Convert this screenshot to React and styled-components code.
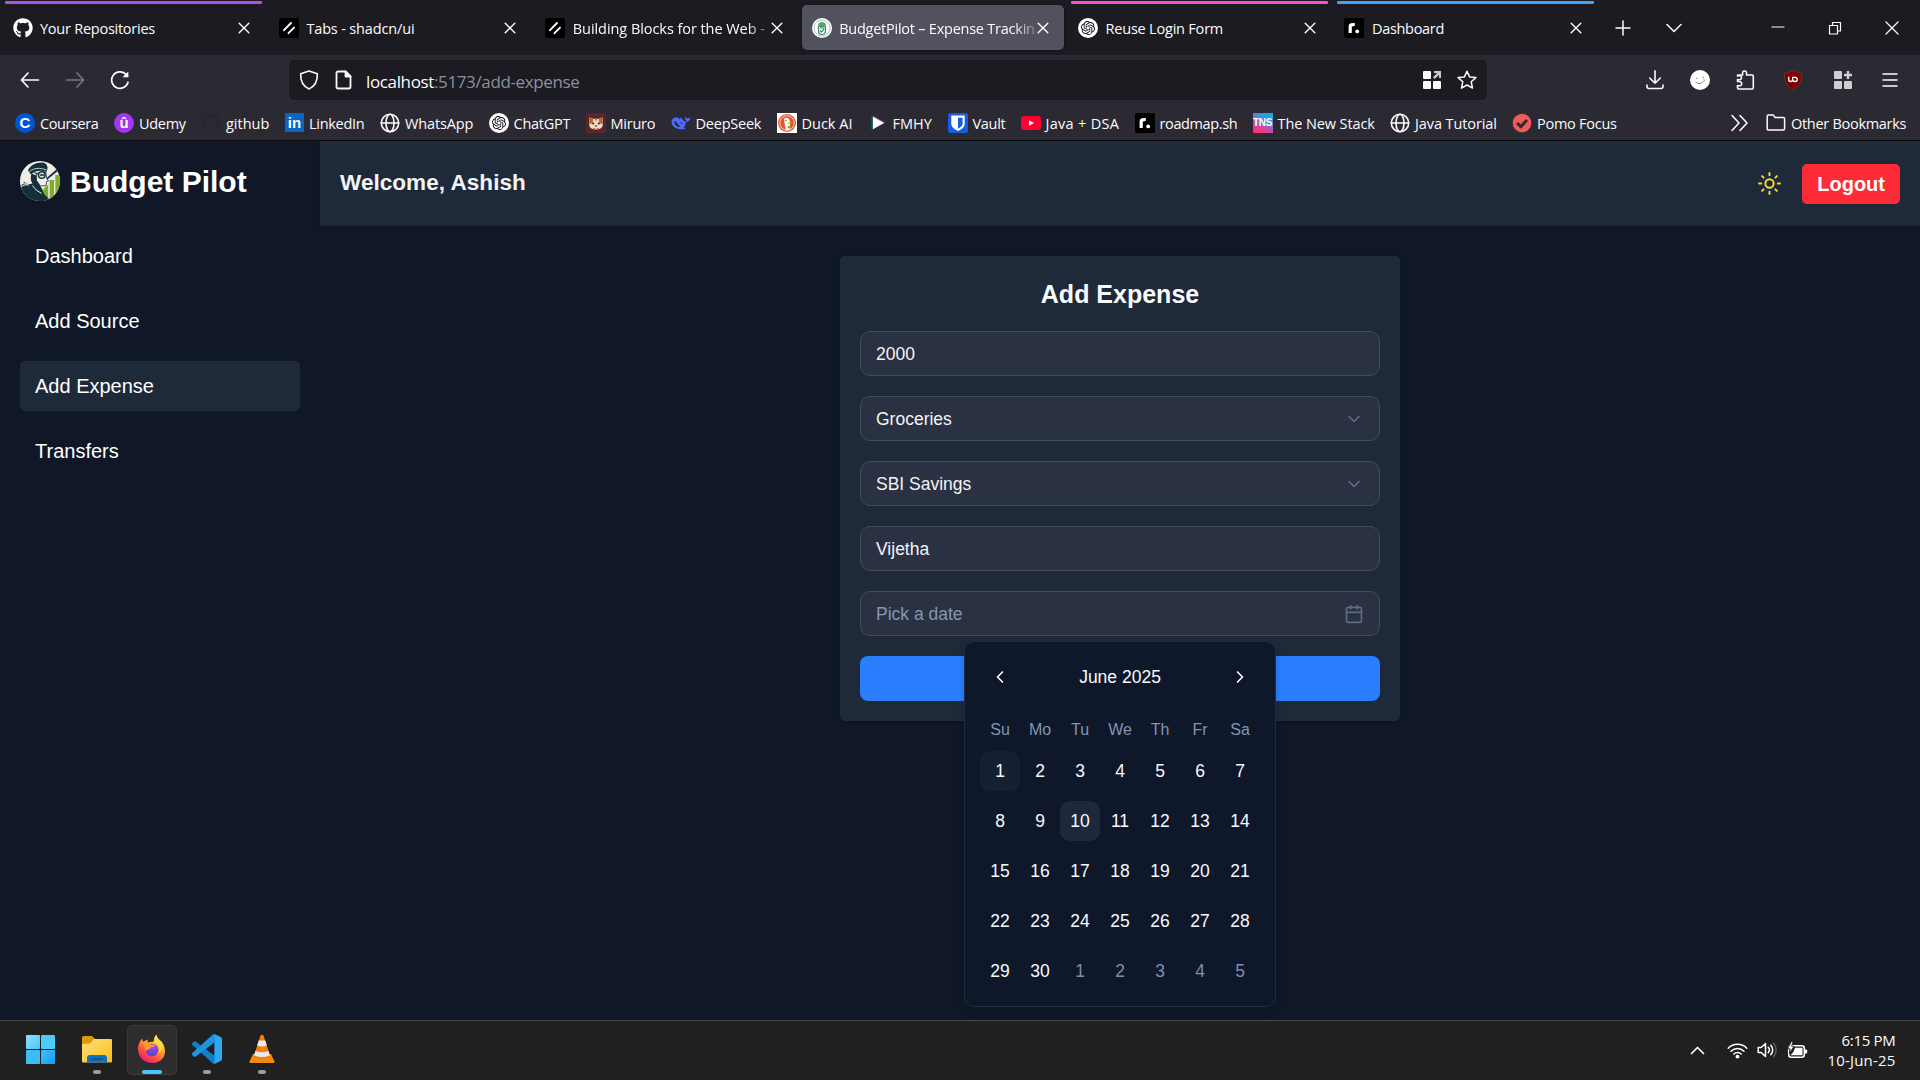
import React from "react";
import styled, { createGlobalStyle, css } from "styled-components";
import { Sun, ChevronDown, ChevronLeft, ChevronRight, Calendar } from "lucide-react";
import { FaGithub } from "react-icons/fa";
import { SiOpenai } from "react-icons/si";

const uiFont = `"Open Sans", "Noto Sans", sans-serif`;
const pageFont = `"Liberation Sans", Arial, sans-serif`;

const GlobalStyle = createGlobalStyle`
  *, *::before, *::after { box-sizing: border-box; }
  body { margin: 0; background: #101828; overflow: hidden; }
  svg { display: block; flex: none; }
`;

const Screen = styled.div`
  display: flex;
  flex-direction: column;
  width: 1920px;
  height: 1080px;
  color: #fbfbfe;
  font-family: ${uiFont};
  white-space: nowrap;
`;

/* ---------- browser chrome ---------- */

const TabBar = styled.div`
  display: flex;
  height: 55px;
  padding-left: 2.5px;
  background: #1c1b22;
`;
const TabList = styled.div`
  display: flex;
  gap: 4.4px;
`;
const TabBox = styled.div`
  display: flex;
  flex-direction: column;
  width: 262px;
  padding-top: 1px;
`;
const GroupLine = styled.div`
  height: 3px;
  margin: 0 2.5px 1px;
  border-radius: 1px;
  background: ${(p) => p.$color || "transparent"};
`;
const TabFace = styled.div`
  display: flex;
  align-items: center;
  height: 45px;
  padding: 0 10px;
  border-radius: 5px;
  background: ${(p) => (p.$active ? "#52525e" : "transparent")};
  box-shadow: ${(p) => (p.$active ? "0 0 3px rgba(0, 0, 0, 0.5)" : "none")};
`;
const TabTitle = styled.div`
  width: 197px;
  margin: 2px 0 0 7.5px;
  font-size: 14.5px;
  line-height: 24px;
  letter-spacing: ${(p) => p.$ls || 0}px;
  ${(p) =>
    p.$fade &&
    css`
      mask-image: linear-gradient(to right, #000 174px, transparent 204px);
    `}
`;
const ChromeSlot = styled.div`
  display: flex;
  align-items: center;
  justify-content: center;
  width: ${(p) => p.$w}px;
  height: ${(p) => p.$h || 45}px;
`;
const WindowControls = styled.div`
  display: flex;
  margin-left: auto;
`;
const NavBar = styled.div`
  display: flex;
  align-items: flex-end;
  height: 45px;
  padding: 0 8px 0 7.5px;
  background: #2b2a33;
`;
const NavButtons = styled.div`
  display: flex;
  width: 281.5px;
  height: 40px;
`;
const UrlBar = styled.div`
  display: flex;
  align-items: center;
  width: 1198px;
  height: 40px;
  padding: 0 10px;
  border-radius: 5px;
  background: #1c1b22;
`;
const UrlText = styled.div`
  margin: 3px auto 0 12px;
  color: #8f8f99;
  font-size: 17px;
  line-height: 26px;
  letter-spacing: -0.365px;
`;
const UrlHost = styled.span`
  color: #fbfbfe;
`;
const UrlIcons = styled.div`
  display: flex;
  align-items: center;
  gap: ${(p) => p.$gap}px;
`;
const Actions = styled.div`
  display: flex;
  margin-left: auto;
`;
const BookmarkBar = styled.div`
  display: flex;
  align-items: center;
  gap: 15px;
  height: 41px;
  padding: 5px 14px 0 15px;
  border-bottom: 1px solid #0c0c0d;
  background: #2b2a33;
`;
const Bookmark = styled.div`
  display: flex;
  align-items: center;
  gap: 5px;
  height: 24px;
`;
const BookmarkLabel = styled.div`
  width: ${(p) => p.$w}px;
  padding-top: 2px;
  font-size: 14.5px;
  line-height: 22px;
  letter-spacing: ${(p) => p.$ls || 0}px;
`;
const OtherBookmarks = styled.div`
  display: flex;
  align-items: center;
  gap: 17px;
  margin-left: auto;
`;
const Tile = styled.div`
  display: flex;
  flex: none;
  align-items: center;
  justify-content: center;
  width: ${(p) => p.$w || 20}px;
  height: ${(p) => p.$w || 20}px;
  border-radius: ${(p) => p.$radius || 0};
  background: ${(p) => p.$bg};
  color: #fff;
  font: bold ${(p) => p.$size || 14}px / 20px ${(p) => p.$font || pageFont};
  letter-spacing: ${(p) => p.$ls || 0}px;
`;

/* ---------- application ---------- */

const AppFrame = styled.div`
  display: flex;
  height: 879px;
  background: #101828;
  color: #fff;
  font-family: ${pageFont};
`;
const Sidebar = styled.aside`
  width: 320px;
  padding: 20px;
`;
const Brand = styled.div`
  display: flex;
  align-items: center;
  gap: 10px;
  height: 40px;
`;
const BrandName = styled.div`
  padding-top: 1px;
  font-size: 30px;
  font-weight: bold;
  line-height: 40px;
`;
const Menu = styled.nav`
  display: flex;
  flex-direction: column;
  gap: 15px;
  margin-top: 30px;
`;
const MenuItem = styled.div`
  height: 50px;
  padding: 0 15px;
  border-radius: 5px;
  background: ${(p) => (p.$active ? "#1e2939" : "transparent")};
  font-size: 20px;
  line-height: 50px;
`;
const Content = styled.div`
  display: flex;
  flex: 1;
  flex-direction: column;
  align-items: center;
`;
const Header = styled.header`
  display: flex;
  align-items: center;
  width: 100%;
  height: 85px;
  padding: 0 20px;
  background: #1e2939;
  box-shadow: 0 1px 3px rgba(0, 0, 0, 0.2);
`;
const Welcome = styled.div`
  margin: 0 auto 1px 0;
  color: #f3f4f6;
  font-size: 22.5px;
  font-weight: bold;
  letter-spacing: 0.05px;
`;
const Logout = styled.div`
  height: 40px;
  margin-left: 20px;
  padding: 0 15px;
  border-radius: 5px;
  background: #fb2c36;
  font-size: 20px;
  font-weight: bold;
  line-height: 40px;
`;
const Card = styled.section`
  display: flex;
  flex-direction: column;
  gap: 20px;
  width: 560px;
  margin-top: 30px;
  padding: 20px;
  border-radius: 5px;
  background: #1e2939;
  box-shadow: 0 1px 3px rgba(0, 0, 0, 0.2);
`;
const CardTitle = styled.h2`
  height: 35px;
  margin: 0;
  color: #f9fafb;
  font-size: 25px;
  line-height: 37px;
  text-align: center;
`;
const Field = styled.div`
  position: relative;
  display: flex;
  align-items: center;
  justify-content: space-between;
  height: 45px;
  padding: 0 15px;
  border: 1px solid #434b59;
  border-radius: 10px;
  background: #293142;
  color: ${(p) => (p.$placeholder ? "#8498b5" : "#f3f4f6")};
  font-size: 17.5px;

  & > svg {
    color: #5f6d82;
  }
`;
const FieldText = styled.span`
  padding-top: 2px;
`;
const Submit = styled.div`
  height: 45px;
  border-radius: 8px;
  background: #2b7fff;
`;
const Popover = styled.div`
  position: absolute;
  z-index: 2;
  top: 49px;
  left: 103px;
  display: flex;
  flex-direction: column;
  width: 312px;
  height: 366px;
  padding: 15px;
  border: 1px solid #232c3c;
  border-radius: 10px;
  background: #0f172a;
  color: #f8fafc;
  box-shadow: 0 4px 8px rgba(0, 0, 0, 0.15);
`;
const MonthRow = styled.div`
  display: flex;
  align-items: center;
  justify-content: space-between;
  height: 40px;
  padding: 0 10px;
  line-height: 40px;
`;
const WeekRow = styled.div`
  display: grid;
  grid-template-columns: repeat(7, 40px);
  margin-top: 21px;
  color: #8295b0;
  font-size: 16px;
  line-height: 24px;
  text-align: center;
`;
const DayGrid = styled.div`
  display: grid;
  grid-template-columns: repeat(7, 40px);
  grid-auto-rows: 40px;
  row-gap: 10px;
  margin-top: 9px;
`;
const Day = styled.div`
  border-radius: 10px;
  background: ${(p) => p.$bg || "transparent"};
  color: ${(p) => (p.$outside ? "#7c90ad" : "#f8fafc")};
  line-height: 40px;
  text-align: center;
`;

/* ---------- taskbar ---------- */

const Taskbar = styled.div`
  display: flex;
  align-items: flex-start;
  height: 60px;
  padding: 4px 24.5px 0 17px;
  border-top: 1px solid #474747;
  background: #202020;
`;
const TaskApps = styled.div`
  display: flex;
  gap: 5px;
`;
const TaskApp = styled.div`
  display: flex;
  flex-direction: column;
  align-items: center;
  width: 50px;
  height: 50px;
  padding-top: 8px;
  border: 1px solid ${(p) => (p.$active ? "#3a3a3a" : "transparent")};
  border-radius: 5px;
  background: ${(p) => (p.$active ? "#2d2d2d" : "transparent")};
`;
const StartButton = styled(TaskApp)`
  align-items: flex-start;
  padding-left: 7px;
`;
const Indicator = styled.div`
  width: ${(p) => (p.$active ? 20 : 8)}px;
  height: 4px;
  margin-top: 6px;
  border-radius: 2px;
  background: ${(p) => (p.$active ? "#4cc2ff" : "#9a9a9a")};
`;
const Tray = styled.div`
  display: flex;
  align-items: center;
  height: 50px;
  margin-left: auto;
`;
const TrayIcons = styled.div`
  display: flex;
  align-items: center;
  gap: 9px;
  margin: 0 19px 0 22px;
`;
const Clock = styled.div`
  display: flex;
  flex-direction: column;
  align-items: flex-end;
  width: 69px;
  font-size: 15px;
  line-height: 20px;
`;
const ClockLine = styled.div`
  letter-spacing: ${(p) => p.$ls}px;
`;

/* ---------- icons ---------- */

const Stroke = ({ s = 20, w = 1.5, c = "#fbfbfe", children, box = 20 }) => (
  <svg width={s} height={s} viewBox={`0 0 ${box} ${box}`} fill="none" stroke={c} strokeWidth={w} strokeLinecap="round" strokeLinejoin="round">
    {children}
  </svg>
);

const CloseIcon = () => (
  <Stroke s={14} box={14} w={1.4}>
    <path d="M2.2 2.2l9.6 9.6M11.8 2.2l-9.6 9.6" />
  </Stroke>
);
const GlobeIcon = () => (
  <Stroke w={1.6}>
    <circle cx="10" cy="10" r="8.7" />
    <ellipse cx="10" cy="10" rx="4" ry="8.7" />
    <path d="M1.3 10h17.4" />
  </Stroke>
);
const ShadcnIcon = () => (
  <svg width="20" height="20" viewBox="0 0 20 20">
    <rect width="20" height="20" rx="2" fill="#000" />
    <path d="M5 12.2L12 5M9.5 15.2l5.5-5.6" stroke="#fff" strokeWidth="1.9" strokeLinecap="round" />
  </svg>
);
const RoadmapIcon = () => (
  <svg width="20" height="20" viewBox="0 0 20 20">
    <rect width="20" height="20" rx="1.5" fill="#000" />
    <path d="M6.200 15V8.200q0-1.800 4.600-1.700" fill="none" stroke="#fff" strokeWidth="3.200" />
    <circle cx="13.2" cy="13.4" r="1.9" fill="#fff" />
  </svg>
);
const BudgetFavicon = () => (
  <svg width="20" height="20" viewBox="0 0 20 20">
    <circle cx="10" cy="10" r="10" fill="#fff" />
    <circle cx="10" cy="10" r="8" fill="none" stroke="#8db8a0" strokeWidth="0.8" />
    <path d="M6.2 6.2c1-3 6.200-3 7.600 0l-.6 2.200H6.800z" fill="#5fa07c" />
    <path d="M6.500 8.500h7v4c0 2.500-1.700 4-3.500 4s-3.500-1.500-3.500-4z" fill="none" stroke="#3d8a61" strokeWidth="1.200" />
    <path d="M8 12.500l1.500 1.500 3-3.500M8 10h4" fill="none" stroke="#2b7a50" strokeWidth="1.100" />
  </svg>
);
const GithubIcon = ({ color }) => <FaGithub size={20} color={color} />;
const ChatGptIcon = () => (
  <Tile $bg="#fff" $radius="50%">
    <SiOpenai size={14} color="#111" />
  </Tile>
);
const MiruroIcon = () => (
  <svg width="20" height="20" viewBox="0 0 20 20">
    <rect width="20" height="20" rx="1" fill="#5b262b" />
    <path d="M3 3.500l4 1.700h6l4-1.700.2 8c0 3.500-3 5.500-7.200 5.500S2.800 15 2.800 11.500z" fill="#f3ddc4" stroke="#2a1213" strokeWidth=".8" />
    <path d="M3.600 4.500l3.800 1.600-.8 4-3.200 1.200zM16.400 4.500l-3.800 1.600.8 4 3.200 1.200zM8.800 5.400h2.400L10 9z" fill="#b8643a" />
    <circle cx="7.200" cy="10.600" r="1" fill="#231011" />
    <circle cx="12.800" cy="10.600" r="1" fill="#231011" />
    <path d="M8.600 12.500h2.800L10 14z" fill="#231011" />
    <path d="M7 15.500q3 1.500 6 0" stroke="#c4574b" strokeWidth="1" fill="none" />
  </svg>
);
const DeepSeekIcon = () => (
  <svg width="20" height="20" viewBox="0 0 20 20" fill="#4d6bfe">
    <path d="M19.500 4.600c-1.300.1-1.700.9-2.700 1-1.300-.2-1.700-1.300-2.900-2.200-.3 1.900.5 3 1.400 4-.4 3.300-1.300 5.400-2.600 7 .6.400 1.300.600 2.100.8-2.300 1.200-4.500 1.500-6.700.9C3.500 15.300.6 12.200.6 8.900c0-3 2.400-4.900 5.300-4.300 1.100.2 2.100.800 3.100 1.600-.1-.900.200-1.400 1-1.800.7 1.300 1.900 2.300 3.200 3.600.9.900 1.700 1.400 2.700 1 2.100-.5 3.300-2.200 3.600-4.400zM9.700 14c-2.500-1.900-3.700-5.700-6.400-6-.5 2.800 2.200 6.600 6.400 6zM9.500 9.200c.3 1 1 1.800 1.900 1.900.4-1-.6-2.100-1.900-1.900z" fillRule="evenodd" />
  </svg>
);
const DuckIcon = () => (
  <svg width="20" height="20" viewBox="0 0 20 20">
    <rect width="20" height="20" fill="#fff" />
    <circle cx="10" cy="10" r="9" fill="#de5833" />
    <circle cx="10" cy="10" r="7.300" fill="none" stroke="#fff" strokeWidth=".7" />
    <path d="M7 6.500C7.500 3.800 12 4 12.600 7.400l.6 9.200c-1.200.6-3.200.7-4.400.3z" fill="#fff" />
    <path d="M10.300 9.500c1-.8 3-.7 4 .2-.8.900-2.800 1.300-4 .8z" fill="#fdd20a" />
    <path d="M10.500 13.500l3-1v3.200l-3-.8z" fill="#65bc46" />
    <circle cx="8.900" cy="7.400" r=".7" fill="#2d4f8e" />
  </svg>
);
const PlayIcon = () => (
  <svg width="20" height="20" viewBox="0 0 20 20">
    <path d="M4.300 3.500v13" stroke="#1f6f79" strokeWidth="1.500" />
    <path d="M5 3.500l11.500 6.200" stroke="#7a3f90" strokeWidth="1.500" />
    <path d="M5 3.800l11.200 6.200L5 16.200z" fill="#fff" />
  </svg>
);
const VaultIcon = () => (
  <svg width="20" height="20" viewBox="0 0 20 20">
    <rect width="20" height="20" rx="2.500" fill="#175ddc" />
    <path d="M3.300 2.500h13.400v8c0 3.500-2.700 5.600-6.700 7.600-4-2-6.700-4.100-6.700-7.600z" fill="#fff" />
    <path d="M10 4.700h4.600v5.800c0 2.200-1.700 3.700-4.600 5.300z" fill="#175ddc" />
  </svg>
);
const YoutubeIcon = () => (
  <svg width="20" height="20" viewBox="0 0 20 20">
    <rect y="3" width="20" height="14" rx="3" fill="#ff0033" />
    <path d="M8 7.200l5 2.800-5 2.800z" fill="#fff" />
  </svg>
);
const PomoIcon = () => (
  <svg width="20" height="20" viewBox="0 0 20 20">
    <circle cx="10" cy="10" r="9.300" fill="#f05b56" />
    <path d="M5.200 10l3.600 3.500 6.200-6.500" fill="none" stroke="#2b2a33" strokeWidth="3" />
  </svg>
);
const FolderOutline = () => (
  <Stroke w={1.5}>
    <path d="M1.200 15.500V3.200q0-1.200 1.200-1.200h4.800l2 2.400h8q1.400 0 1.400 1.400v9.700q0 1.500-1.400 1.500H2.600q-1.400 0-1.400-1.500z" />
  </Stroke>
);
const SquaresIcon = ({ plus }) => (
  <svg width="18" height="18" viewBox="0 0 18 18" fill={plus ? "#cfcfd2" : "#fbfbfe"}>
    <rect width="8" height="8" rx="1" />
    <rect y="10" width="8" height="8" rx="1" />
    <rect x="10" y="10" width="8" height="8" rx="1" />
    {plus ? (
      <path d="M12.800 0h2.400v2.800H18v2.400h-2.800V8h-2.400V5.200H10V2.800h2.800z" />
    ) : (
      <path d="M11 0h7v7h-2V3.700L11.800 8 10 6.200 14.200 2H11z" fill="#c9c9cd" />
    )}
  </svg>
);
const PilotLogo = () => (
  <svg width="40" height="40" viewBox="0 0 40 40">
    <clipPath id="pilot-clip">
      <circle cx="20" cy="20" r="20" />
    </clipPath>
    <g clipPath="url(#pilot-clip)">
      <rect width="40" height="40" fill="#efede6" />
      <path d="M23.500 27.500l5-4V40h-5zM29.500 19h4.700v21h-4.700zM35.200 14H40v26h-4.800z" fill="#7fae2c" />
      <path d="M26 17.500L37.500 7.500l1.300 1.700-13 10.600z" fill="#16303a" />
      <path d="M8 9.500C10 4 17 1 22.500 1.500c3.500.4 5.300 3 5 6l-1 3.500-4-1c-4-.6-8 .3-11.500 3.500z" fill="#16303a" />
      <path d="M9.500 10.500c4.500-3.500 10-4.200 17-1.500" stroke="#efede6" strokeWidth=".8" fill="none" />
      <path d="M11.500 12.500c-1.500 5-.5 9 2.500 12l4.500 4.500 4.500.5-5.500-9-1-6z" fill="#16303a" />
      <path d="M16.500 12.500l9.500-1 .5 5.500 2 3-1.800.5-.6 4-5.600.5-4-5.500z" fill="#efede6" stroke="#16303a" strokeWidth=".8" />
      <circle cx="21.800" cy="14" r="3.300" fill="#dfe3e1" stroke="#16303a" strokeWidth="1.500" />
      <path d="M20 14h4M14.500 11.500l3.500 1.500" stroke="#16303a" strokeWidth="1.300" />
      <path d="M0 26.500l4-5.500 5 2.200 3.500-.8 10.500 7 1 3.200v8H4C1 37-1 31 0 26.500z" fill="#16303a" />
      <path d="M0 22.500l8 .4M1 26c3-2.500 5.500-2.400 8-2M12.500 24.500c2.500 4 6 6.500 10.500 8.500" stroke="#efede6" strokeWidth="1" fill="none" />
      <path d="M28.900 22v18M34.700 15v25" stroke="#efede6" strokeWidth=".9" />
      <path d="M22 31l9 9H20z" fill="#16303a" />
    </g>
  </svg>
);
const StartIcon = () => (
  <svg width="30" height="30" viewBox="0 0 30 30">
    <defs>
      <linearGradient id="win" x1="0" y1="0" x2="1" y2="1">
        <stop offset="0" stopColor="#8ce0ff" />
        <stop offset="1" stopColor="#4cc6f6" />
      </linearGradient>
      <linearGradient id="win2" x1="0" y1="0" x2="1" y2="1">
        <stop offset="0" stopColor="#42bff7" />
        <stop offset="1" stopColor="#149df5" />
      </linearGradient>
    </defs>
    <rect x="1" y="1" width="14" height="14" rx="1" fill="url(#win)" />
    <rect x="16" y="1" width="14" height="14" rx="1" fill="#4fcbf8" />
    <rect x="1" y="16" width="14" height="14" rx="1" fill="#3dbdf6" />
    <rect x="16" y="16" width="14" height="14" rx="1" fill="url(#win2)" />
  </svg>
);
const ExplorerIcon = () => (
  <svg width="30" height="30" viewBox="0 0 30 30">
    <defs>
      <linearGradient id="folder" x1="0" y1="0" x2="1" y2="1">
        <stop offset="0" stopColor="#ffdf7c" />
        <stop offset="1" stopColor="#f9bd17" />
      </linearGradient>
    </defs>
    <path d="M0 4q0-2 2-2h8l3 3v6H0z" fill="#dc9a08" />
    <path d="M0 10l8-.5L12 5h17q1 0 1 1v21.500q0 1-1 1H1q-1 0-1-1z" fill="url(#folder)" />
    <path d="M5 28.500V24q0-3 3-3h14q3 0 3 3v4.500z" fill="#0f6fc0" />
    <path d="M9 25h12" stroke="#0a4a86" strokeWidth="1.400" />
  </svg>
);
const FirefoxIcon = () => (
  <svg width="30" height="30" viewBox="0 0 30 30">
    <defs>
      <linearGradient id="fox" x1=".8" y1=".1" x2=".25" y2="1">
        <stop offset="0" stopColor="#fff44f" />
        <stop offset=".35" stopColor="#ffa72b" />
        <stop offset=".7" stopColor="#ff4a45" />
        <stop offset="1" stopColor="#e31587" />
      </linearGradient>
      <radialGradient id="globe" cx=".6" cy=".3" r=".8">
        <stop offset="0" stopColor="#a845f0" />
        <stop offset="1" stopColor="#4a43c4" />
      </radialGradient>
    </defs>
    <path d="M19.500.5c.4 3 1.800 4.200 4 6.200 1.200.5 1.700 1.300 2 2.400 4.600 7 3.500 19.400-10.300 20C7.500 29 1 23.500 1 15c0-3.500 1-5.800 2.600-8.500L5 4.500l1 3.300 4.700-2.300-.1 3c2.200-.7 4.200-1 6.200-.6-.2-3.500 1-6 2.700-7.400z" fill="url(#fox)" />
    <circle cx="15" cy="16" r="6.300" fill="url(#globe)" />
    <path d="M5.500 8.500c3.500-1 6.500.2 8.800 2.200h4.200c-.6 1.700-2.200 2-4.500 2.600-.5 2-3.500 1.600-4.500 3.700-1-1-2.500-5.500-4-8.500z" fill="#ff9a2e" />
    <path d="M16.500 8.500c5 .5 7.500 6.300 4.500 10.800 3-1.500 4-4.300 4.300-7-2.300-4-5-6-5.500-9.500-2 1.700-3 3.500-3.300 5.700z" fill="#ffd83a" />
  </svg>
);
const CodeIcon = () => (
  <svg width="30" height="30" viewBox="0 0 24 24">
    <path fill="#0f7fc9" d="M23.150 2.587L18.210.21a1.494 1.494 0 0 0-1.705.29l-9.460 8.630-4.120-3.128a.999.999 0 0 0-1.276.057L.327 7.261A1 1 0 0 0 .326 8.740L3.899 12 .326 15.260a1 1 0 0 0 .001 1.479L1.650 17.940a.999.999 0 0 0 1.276.057l4.120-3.128 9.460 8.630a1.492 1.492 0 0 0 1.704.290l4.942-2.377A1.500 1.500 0 0 0 24 20.060V3.939a1.500 1.500 0 0 0-.850-1.352zm-5.146 14.861L10.826 12l7.178-5.448v10.896z" />
    <path fill="#2ea7ee" d="M18 .2l5.150 2.387A1.500 1.500 0 0 1 24 3.939V20.060a1.500 1.500 0 0 1-.850 1.352L18 23.800z" />
    <path fill="#1d94dc" d="M.327 16.740a1 1 0 0 1 0-1.480L17 .3q1-.5 1 1v5.250L2.926 18a1 1 0 0 1-1.276-.06z" />
  </svg>
);
const VlcIcon = () => (
  <svg width="30" height="30" viewBox="0 0 30 30">
    <path d="M6 20h18l3.500 7.500q.4 1.500-1 1.500h-23q-1.400 0-1-1.500z" fill="#f08a10" />
    <path d="M13.500 1.500q1.500-1.500 3 0L23.500 23q-8.500 4-17 0z" fill="#f47f0a" />
    <path d="M11.800 6.500h6.400l1.700 5q-4.900 2-9.800 0zM8.400 17q6.600 2.400 13.200 0l1.300 4.500q-7.900 3-15.800 0z" fill="#e8eaee" />
  </svg>
);
const WifiIcon = () => (
  <svg width="21" height="17" viewBox="0 0 21 17" fill="none" stroke="#fff" strokeWidth="1.500" strokeLinecap="round">
    <path d="M1.200 6.200a13 13 0 0 1 18.600 0M4 9.300a9 9 0 0 1 13 0M6.800 12a5.300 5.300 0 0 1 7.400 0" />
    <circle cx="10.500" cy="14.600" r="1.200" fill="#fff" />
  </svg>
);
const VolumeIcon = () => (
  <svg width="21" height="18" viewBox="0 0 21 18" fill="none" stroke="#fff" strokeWidth="1.500" strokeLinecap="round" strokeLinejoin="round">
    <path d="M1.200 6.500h3L8.500 2.500v13l-4.300-4h-3z" />
    <path d="M11.200 6.300a4 4 0 0 1 0 5.400M13.800 4.200a7 7 0 0 1 0 9.600" />
    <path d="M16.500 2.200a10 10 0 0 1 0 13.600" stroke="#5c5c5c" />
  </svg>
);
const BatteryIcon = () => (
  <svg width="21" height="18" viewBox="0 0 21 18">
    <rect x="1.700" y="4.700" width="15.600" height="11.600" rx="2.500" fill="none" stroke="#fff" strokeWidth="1.500" />
    <path d="M18 8.500h1.200q1 0 1 1v2q0 1-1 1H18z" fill="#fff" />
    <path d="M8 6.700h7.500v7.600h-12l3-3.500z" fill="#fff" />
    <path d="M4.300.5L.8 7.800h2.400L2.200 12.500 7 5.300H4.600L6 .5z" fill="#fff" stroke="#202020" strokeWidth=".8" />
  </svg>
);

/* ---------- data ---------- */

const TABS = [
  { title: "Your Repositories", ls: -0.247, line: "#ac51f0", icon: <GithubIcon color="#fff" /> },
  { title: "Tabs - shadcn/ui", ls: -0.154, icon: <ShadcnIcon /> },
  { title: "Building Blocks for the Web -", ls: -0.06, fade: true, icon: <ShadcnIcon /> },
  { title: "BudgetPilot – Expense Trackin", ls: -0.24, fade: true, active: true, icon: <BudgetFavicon /> },
  { title: "Reuse Login Form", ls: -0.209, line: "#ff4bda", icon: <ChatGptIcon /> },
  { title: "Dashboard", ls: -0.316, line: "#37a4ff", icon: <RoadmapIcon /> },
];

const BOOKMARKS = [
  { label: "Coursera", w: 59, ls: -0.4, icon: <Tile $bg="#0056d2" $radius="50%" $size={15}>C</Tile> },
  { label: "Udemy", w: 47, ls: -0.3, icon: <Tile $bg="#a435f0" $radius="50%" $size={15}>û</Tile> },
  { label: "github", w: 44, ls: 0, icon: <GithubIcon color="#24292e" /> },
  { label: "LinkedIn", w: 56, ls: -0.3, icon: <Tile $bg="#0a66c2" $w={19} $size={15}>in</Tile> },
  { label: "WhatsApp", w: 68.5, ls: -0.13, icon: <GlobeIcon /> },
  { label: "ChatGPT", w: 57, ls: -0.24, icon: <ChatGptIcon /> },
  { label: "Miruro", w: 45, ls: -0.24, icon: <MiruroIcon /> },
  { label: "DeepSeek", w: 66, ls: -0.22, icon: <DeepSeekIcon /> },
  { label: "Duck AI", w: 51, ls: 0, icon: <DuckIcon /> },
  { label: "FMHY", w: 40, ls: 0, icon: <PlayIcon /> },
  { label: "Vault", w: 33, ls: -0.3, icon: <VaultIcon /> },
  { label: "Java + DSA", w: 74, ls: 0.3, icon: <YoutubeIcon /> },
  { label: "roadmap.sh", w: 78, ls: -0.38, icon: <RoadmapIcon /> },
  {
    label: "The New Stack",
    w: 97.5,
    ls: -0.1,
    icon: <Tile $bg="linear-gradient(25deg, #ff2f7e 15%, #8a6cc0 50%, #12a9ee 85%)" $size={10} $ls={-0.3}>TNS</Tile>,
  },
  { label: "Java Tutorial", w: 82, ls: -0.1, icon: <GlobeIcon /> },
  { label: "Pomo Focus", w: 80, ls: -0.26, icon: <PomoIcon /> },
];

const MENU = ["Dashboard", "Add Source", "Add Expense", "Transfers"];
const WEEKDAYS = ["Su", "Mo", "Tu", "We", "Th", "Fr", "Sa"];
const DAYS = Array.from({ length: 35 }, (_, i) => ({ n: (i % 30) + 1, outside: i >= 30 }));
const dayFill = (i) => (i === 0 ? "#152033" : i === 9 ? "#1d293b" : undefined);

export default function App() {
  return (
    <Screen>
      <GlobalStyle />
      <TabBar>
        <TabList>
          {TABS.map((t) => (
            <TabBox key={t.title}>
              <GroupLine $color={t.line} />
              <TabFace $active={t.active}>
                {t.icon}
                <TabTitle $fade={t.fade} $ls={t.ls}>{t.title}</TabTitle>
                <CloseIcon />
              </TabFace>
            </TabBox>
          ))}
        </TabList>
        <ChromeSlot $w={54} $h={56}>
          <Stroke s={16} box={16}><path d="M8 1v14M1 8h14" /></Stroke>
        </ChromeSlot>
        <ChromeSlot $w={48} $h={55}>
          <Stroke s={16} box={16}><path d="M1 4.500l7 7 7-7" /></Stroke>
        </ChromeSlot>
        <WindowControls>
          <ChromeSlot $w={57} $h={53}>
            <Stroke s={14} box={14} w={1.2}><path d="M1 7h12" /></Stroke>
          </ChromeSlot>
          <ChromeSlot $w={57} $h={55}>
            <Stroke s={14} box={14} w={1.2}><path d="M1.500 4.500h8v8.500h-8zM4.500 4.500v-3h8V10h-3" /></Stroke>
          </ChromeSlot>
          <ChromeSlot $w={57} $h={55}>
            <Stroke s={14} box={14} w={1.2}><path d="M1 1l12 12M13 1L1 13" /></Stroke>
          </ChromeSlot>
        </WindowControls>
      </TabBar>

      <NavBar>
        <NavButtons>
          <ChromeSlot $w={45} $h={40}>
            <Stroke w={1.7}><path d="M18.500 10H1.500M8 3L1.500 10 8 17" /></Stroke>
          </ChromeSlot>
          <ChromeSlot $w={45} $h={40}>
            <Stroke w={1.7} c="#77767e"><path d="M1.500 10h17M12 3l6.500 7L12 17" /></Stroke>
          </ChromeSlot>
          <ChromeSlot $w={45} $h={40}>
            <Stroke w={1.7}>
              <path d="M18 12.200a8.300 8.300 0 1 1-2.500-8.300l2 2" />
              <path d="M18.300 1.500v5.800h-5.800z" fill="#fbfbfe" stroke="none" />
            </Stroke>
          </ChromeSlot>
        </NavButtons>
        <UrlBar>
          <UrlIcons $gap={15}>
            <Stroke w={1.6}><path d="M10 1L18.300 3.800c.3 6.500-1.800 12.200-8.300 15.200C3.500 16 1.400 10.300 1.700 3.800z" /></Stroke>
            <Stroke w={1.8}>
              <path d="M11.500 1.500H4.200q-1.700 0-1.700 1.700v13.600q0 1.700 1.700 1.700h10.600q1.700 0 1.700-1.700V6.500z" />
              <path d="M11.500 1.500v5h5z" fill="#fbfbfe" />
            </Stroke>
          </UrlIcons>
          <UrlText>
            <UrlHost>localhost</UrlHost>:5173/add-expense
          </UrlText>
          <UrlIcons $gap={16}>
            <SquaresIcon />
            <Stroke w={1.5}>
              <path d="M10 1.200l2.600 5.700 6.300.7-4.700 4.200 1.300 6.300L10 15l-5.500 3.100 1.300-6.300L1.100 7.600l6.300-.7z" />
            </Stroke>
          </UrlIcons>
        </UrlBar>
        <Actions>
          <ChromeSlot $w={45} $h={40}>
            <Stroke w={1.6}><path d="M10 .8v12.400M4.700 8L10 13.300 15.300 8M2 15v1.500q0 2 2 2h12q2 0 2-2V15" /></Stroke>
          </ChromeSlot>
          <ChromeSlot $w={46} $h={40}>
            <svg width="20" height="20" viewBox="0 0 20 20">
              <circle cx="10" cy="10" r="10" fill="#fff" />
              <path d="M5.500 12q4.500 4 8.500-1.500M13.500 9.500l1.500 1M6 8.500l1.500-.5M12.500 7.500l1.500-.3" stroke="#8a8a8a" strokeWidth="1" fill="none" />
            </svg>
          </ChromeSlot>
          <ChromeSlot $w={44} $h={40}>
            <Stroke w={1.6}>
              <path d="M2.500 11.500V9.600q4 .8 4-1.800T2.500 6V5h5.200q-.8-4 1.800-4t2 4h5.600q1.200 0 1.200 1.200v11.600q0 1.200-1.200 1.200H3.700q-1.200 0-1.200-1.200v-2.300q4.200.8 4.200-1.800t-4.200-2.200z" />
            </Stroke>
          </ChromeSlot>
          <ChromeSlot $w={51} $h={40}>
            <svg width="20" height="20" viewBox="0 0 20 20">
              <path d="M10 .3c2.500 1.800 5.500 2.300 8.700 2.500 0 8-1.700 13-8.700 17C3 15.800 1.300 10.800 1.300 2.800 4.500 2.600 7.500 2.100 10 .3z" fill="#800000" stroke="#6b4347" strokeWidth=".6" />
              <path d="M5.700 6.700v2.800q0 2 2 2t2-2V6.700M10.400 7.300h1.600q2.300.2 2.300 2.200t-2.300 2h-.6q-1.500 0-1.500-1.800" fill="none" stroke="#fff" strokeWidth="1.300" />
            </svg>
          </ChromeSlot>
          <ChromeSlot $w={50} $h={40}>
            <SquaresIcon plus />
          </ChromeSlot>
          <ChromeSlot $w={44} $h={39}>
            <Stroke s={16} box={16} w={1.5}><path d="M1 2h14M1 8h14M1 14h14" /></Stroke>
          </ChromeSlot>
        </Actions>
      </NavBar>

      <BookmarkBar>
        {BOOKMARKS.map((b) => (
          <Bookmark key={b.label}>
            {b.icon}
            <BookmarkLabel $w={b.w} $ls={b.ls}>{b.label}</BookmarkLabel>
          </Bookmark>
        ))}
        <OtherBookmarks>
          <Stroke w={1.6}><path d="M3 2.500l7 7.500-7 7.500M11 2.500l7 7.500-7 7.500" /></Stroke>
          <Bookmark>
            <FolderOutline />
            <BookmarkLabel $w={115} $ls={-0.29}>Other Bookmarks</BookmarkLabel>
          </Bookmark>
        </OtherBookmarks>
      </BookmarkBar>

      <AppFrame>
        <Sidebar>
          <Brand>
            <PilotLogo />
            <BrandName>Budget Pilot</BrandName>
          </Brand>
          <Menu>
            {MENU.map((m) => (
              <MenuItem key={m} $active={m === "Add Expense"}>{m}</MenuItem>
            ))}
          </Menu>
        </Sidebar>
        <Content>
          <Header>
            <Welcome>Welcome, Ashish</Welcome>
            <Sun size={25} color="#fcdc22" strokeWidth={1.9} />
            <Logout>Logout</Logout>
          </Header>
          <Card>
            <CardTitle>Add Expense</CardTitle>
            <Field><FieldText>2000</FieldText></Field>
            <Field><FieldText>Groceries</FieldText><ChevronDown size={20} /></Field>
            <Field><FieldText>SBI Savings</FieldText><ChevronDown size={20} /></Field>
            <Field><FieldText>Vijetha</FieldText></Field>
            <Field $placeholder>
              <FieldText>Pick a date</FieldText>
              <Calendar size={20} />
              <Popover>
                <MonthRow>
                  <ChevronLeft size={20} />
                  June 2025
                  <ChevronRight size={20} />
                </MonthRow>
                <WeekRow>
                  {WEEKDAYS.map((d) => <span key={d}>{d}</span>)}
                </WeekRow>
                <DayGrid>
                  {DAYS.map((d, i) => (
                    <Day key={i} $outside={d.outside} $bg={dayFill(i)}>{d.n}</Day>
                  ))}
                </DayGrid>
              </Popover>
            </Field>
            <Submit />
          </Card>
        </Content>
      </AppFrame>

      <Taskbar>
        <TaskApps>
          <StartButton><StartIcon /></StartButton>
          <TaskApp><ExplorerIcon /><Indicator /></TaskApp>
          <TaskApp $active><FirefoxIcon /><Indicator $active /></TaskApp>
          <TaskApp><CodeIcon /><Indicator /></TaskApp>
          <TaskApp><VlcIcon /><Indicator /></TaskApp>
        </TaskApps>
        <Tray>
          <Stroke s={15} box={15} w={1.7}><path d="M1.500 10.500l6-6 6 6" /></Stroke>
          <TrayIcons>
            <WifiIcon />
            <VolumeIcon />
            <BatteryIcon />
          </TrayIcons>
          <Clock>
            <ClockLine $ls={-0.3}>6:15 PM</ClockLine>
            <ClockLine $ls={0.18}>10-Jun-25</ClockLine>
          </Clock>
        </Tray>
      </Taskbar>
    </Screen>
  );
}
